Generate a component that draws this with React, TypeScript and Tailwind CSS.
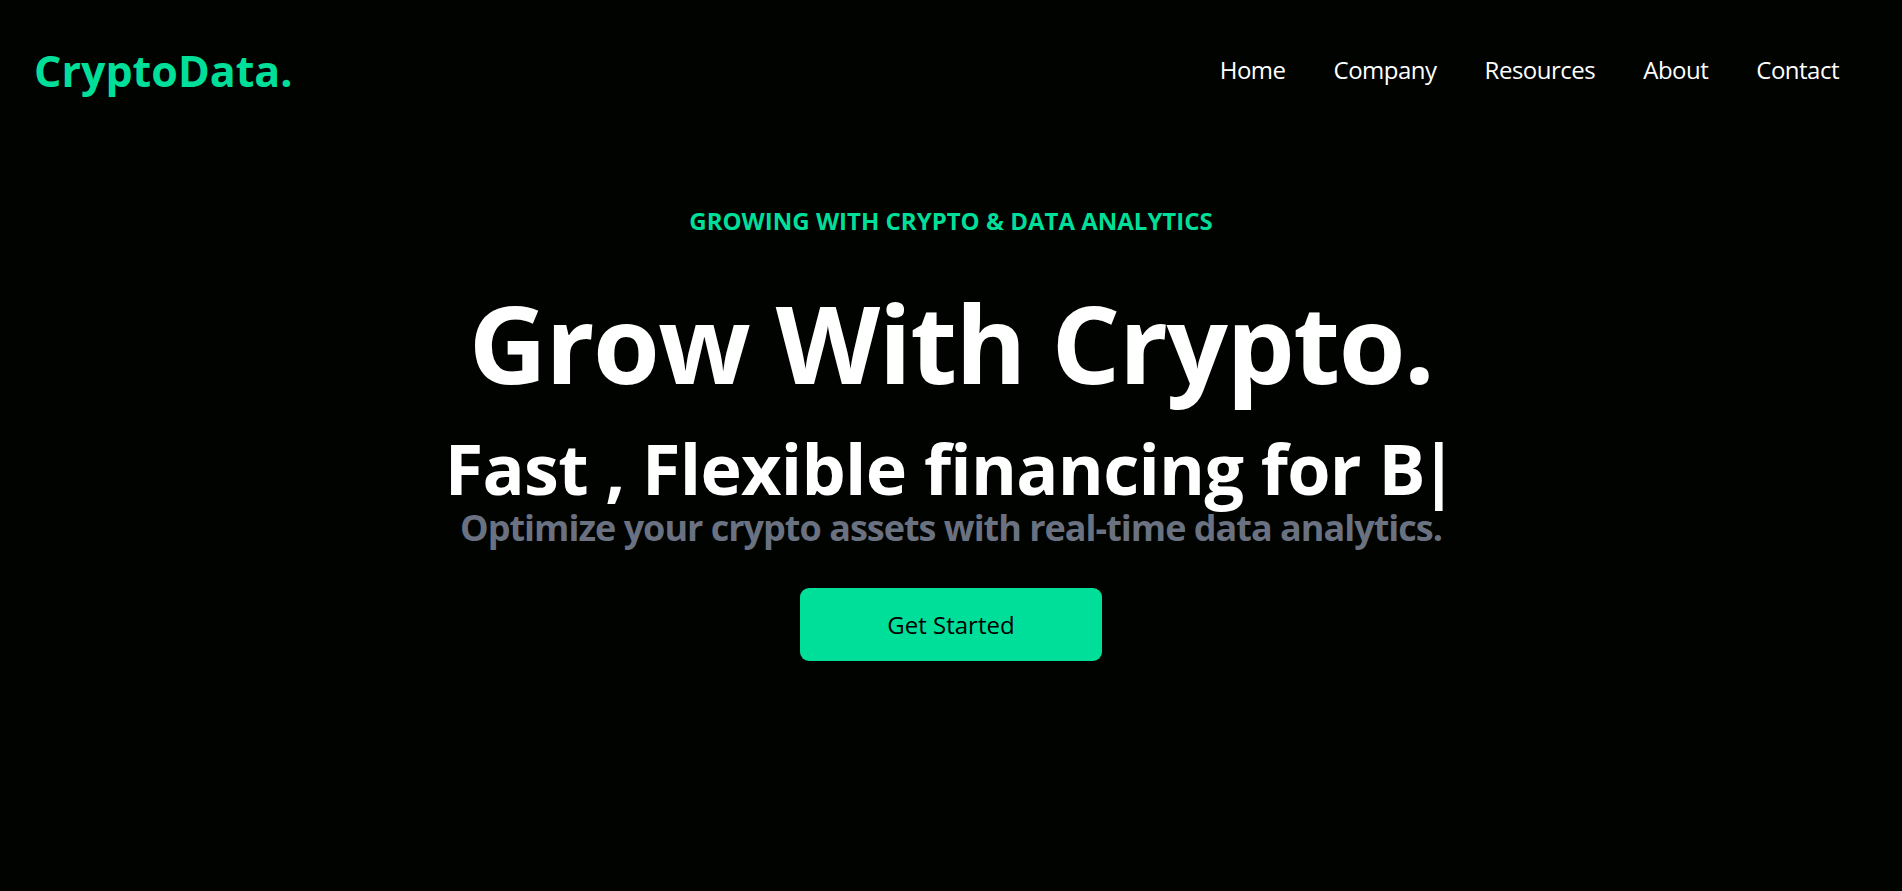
import React from "react";

const navLinks = ["Home", "Company", "Resources", "About", "Contact"];

const Navbar: React.FC = () => {
  return (
    <div className="flex justify-between items-center h-[140px] pl-[34px] pr-[63px]">
      <h1 className="text-[43px] font-bold text-[#00df9a] leading-none">CryptoData.</h1>
      <ul className="flex gap-12 text-[24px] tracking-[-0.5px] leading-none">
        {navLinks.map((link) => (
          <li key={link} className="cursor-pointer">
            {link}
          </li>
        ))}
      </ul>
    </div>
  );
};

const Hero: React.FC = () => {
  return (
    <div className="flex flex-col items-center text-center">
      <p className="mt-[65px] text-[24px] leading-8 font-bold text-[#00df9a]">
        GROWING WITH CRYPTO &amp; DATA ANALYTICS
      </p>
      <h1 className="mt-[52px] text-[108px] tracking-[-1.5px] leading-none font-bold">Grow With Crypto.</h1>
      <div className="mt-[36px] text-[70px] tracking-[-0.7px] leading-none font-bold">
        Fast , Flexible financing for <span className="tracking-[-6px]">B</span>|
      </div>
      <p className="mt-[7px] text-[36px] tracking-[-1px] leading-none font-bold text-gray-500">
        Optimize your crypto assets with real-time data analytics.
      </p>
      <button className="mt-[42px] w-[302px] h-[73px] bg-[#00df9a] rounded-[9px] text-black text-[24px] font-medium">
        Get Started
      </button>
    </div>
  );
};

export default function App() {
  return (
    <div
      className="min-h-screen bg-[#000300] text-white"
      style={{ fontFamily: '"Open Sans", "Noto Sans", sans-serif' }}
    >
      <Navbar />
      <Hero />
    </div>
  );
}
